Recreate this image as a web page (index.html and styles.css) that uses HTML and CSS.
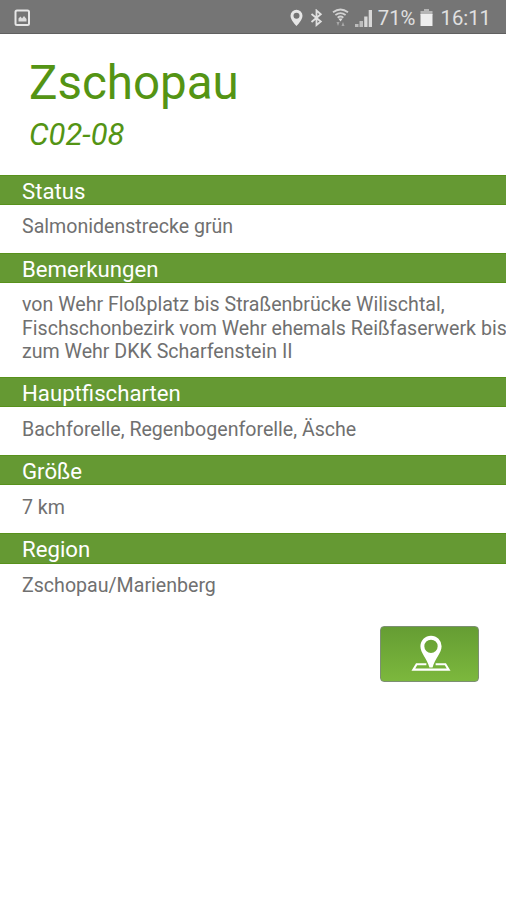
FILE: index.html
```html
<!DOCTYPE html>
<html lang="de">
  <head>
    <meta charset="UTF-8" />
    <meta name="viewport" content="width=device-width, initial-scale=1.0" />
    <title>Zschopau C02-08</title>
    <link rel="stylesheet" href="styles.css">
  </head>
  <body>
    <div class="statusbar">
      <svg class="icon-picture" width="17" height="18" viewBox="0 0 17 18">
        <rect x="1.5" y="1.5" width="13.5" height="14.5" rx="1.5" fill="none" stroke="#e6e6e6" stroke-width="2" />
        <path d="M4.5 12.5v-3l2-2 1.5 2 2-2.5 2.5 3v2.500z" fill="#dcdcdc" />
      </svg>
      <div class="statusbar-right">
        <svg class="icon-pin" width="13" height="18" viewBox="0 0 13 18">
          <path fill="#e6e6e6" fill-rule="evenodd" d="M6.500 .7a6 6 0 0 0-6 6c0 4.300 6 10.300 6 10.300s6-6 6-10.300a6 6 0 0 0-6-6zm0 3a3 3 0 1 1 0 6 3 3 0 0 1 0-6z" />
        </svg>
        <svg class="icon-bluetooth" width="13" height="18" viewBox="0 0 13 18">
          <path fill="none" stroke="#e0e0e0" stroke-width="1.800" d="M1.500 5l9.300 7.500-4.300 3.500V1.500l4.300 3.700L1.500 13" />
        </svg>
        <svg class="icon-wifi" width="17" height="19" viewBox="0 0 17 19">
          <path fill="none" stroke="#d2d2d2" stroke-width="1.800" d="M1 4.200q7.500-5.400 15 0M3.400 7q5.100-3.800 10.200 0M5.600 9.600q2.900-2.200 5.800 0" />
          <path fill="#dedede" d="M6.300 10.500h4.400l-2.200 3z" />
          <path fill="#a8a8a8" d="M4.500 14h3l-1.500 4zM9.500 18h3L11 14z" />
        </svg>
        <svg class="icon-signal" width="18" height="18" viewBox="0 0 18 18">
          <path fill="#bdbdbd" d="M0 15h3.500v3H0zM4.500 12H8v6H4.500z" />
          <path fill="#d8d8d8" d="M9.200 7.500h3.300V18H9.200zM13.700 1H17v17h-3.300z" />
        </svg>
        <span class="percent">71%</span>
        <svg class="icon-battery" width="13" height="17" viewBox="0 0 13 17">
          <path fill="#b5b5b5" d="M4 0h5v2h3.500v4H.5V2H4z" />
          <path fill="#eeeeee" d="M.5 5h12v12H.5z" />
        </svg>
        <span class="time">16:11</span>
      </div>
    </div>

    <div class="header">
      <h1>Zschopau</h1>
      <p class="number">C02-08</p>
    </div>

    <div class="details">
      <h2>Status</h2>
      <p>Salmonidenstrecke grün</p>
      <h2>Bemerkungen</h2>
      <p>von Wehr Floßplatz bis Straßenbrücke Wilischtal,<br>Fischschonbezirk vom Wehr ehemals Reißfaserwerk bis<br>zum Wehr DKK Scharfenstein II</p>
      <h2>Hauptfischarten</h2>
      <p>Bachforelle, Regenbogenforelle, Äsche</p>
      <h2>Größe</h2>
      <p>7 km</p>
      <h2>Region</h2>
      <p>Zschopau/Marienberg</p>
    </div>

    <div class="actions">
      <button class="map-button" aria-label="Karte">
        <svg width="42" height="37" viewBox="0 0 40 36">
          <path fill="#fff" fill-rule="evenodd" d="M20 .7A10.300 10.300 0 0 0 9.700 11c0 6.500 6.300 12 8.800 20.500h3C24 23 30.300 17.500 30.300 11A10.300 10.300 0 0 0 20 .7zm0 3.800a6.500 6.500 0 1 1 0 13 6.500 6.500 0 0 1 0-13z" />
          <path fill="none" stroke="#fff" stroke-width="2" d="M15.500 28.500H6L2.800 33.700h34.400L34 28.500h-9.500" />
        </svg>
      </button>
    </div>
  </body>
</html>
```
FILE: styles.css
```css
body {
  margin: 0;
  background: #fff;
  font-family: Roboto, "Liberation Sans", sans-serif;
  overflow: hidden;
}
h1,
h2,
p {
  margin: 0;
  font-weight: 400;
  white-space: nowrap;
}
.statusbar {
  display: flex;
  justify-content: space-between;
  align-items: center;
  box-sizing: border-box;
  height: 34px;
  padding: 2px 15px 0 14px;
  background: #757575;
  border-bottom: 1px solid #606060;
  color: #e0e0e0;
  font-size: 20.300px;
}
.statusbar-right {
  display: flex;
  align-items: center;
}
.icon-bluetooth {
  margin-left: 7px;
}
.icon-wifi {
  margin-left: 9px;
}
.icon-signal {
  margin-left: 6px;
}
.percent {
  margin-left: 5px;
}
.icon-battery {
  margin-left: 5px;
}
.time {
  margin-left: 7px;
}
.header {
  box-sizing: border-box;
  height: 140.500px;
  padding: 21px 29px 0;
  color: #549414;
}
.header h1 {
  font-size: 47.500px;
  line-height: 56px;
}
.number {
  margin-top: 5px;
  font-size: 31px;
  line-height: 38px;
  font-style: italic;
}
.details h2 {
  box-sizing: border-box;
  height: 30.300px;
  padding-left: 22px;
  background: #659933;
  border-top: 1px solid #58911c;
  border-bottom: 1px solid #58911c;
  color: #fff;
  font-size: 22.200px;
  line-height: 30.400px;
}
.details p {
  padding: 10.600px 0 14px 22px;
  color: #707070;
  font-size: 19.600px;
  line-height: 23.200px;
}
.actions {
  display: flex;
  justify-content: flex-end;
  padding: 15px 27px 0;
}
.map-button {
  display: flex;
  justify-content: center;
  align-items: center;
  box-sizing: border-box;
  width: 99px;
  height: 56px;
  padding: 0 0 1px 3px;
  border: 1px solid #7c8f72;
  border-radius: 4px;
  background: linear-gradient(#659d33, #7cb83d);
}
.map-button svg {
  flex: none;
}
```
